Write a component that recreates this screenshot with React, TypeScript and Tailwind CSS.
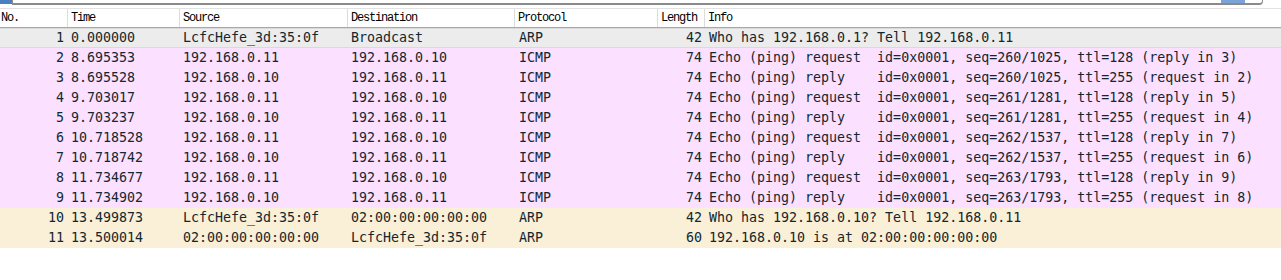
import React from "react";

type Packet = {
  no: number;
  time: string;
  src: string;
  dst: string;
  proto: "ARP" | "ICMP";
  len: number;
  info: string;
};

const packets: Packet[] = [
  { no: 1, time: "0.000000", src: "LcfcHefe_3d:35:0f", dst: "Broadcast", proto: "ARP", len: 42, info: "Who has 192.168.0.1? Tell 192.168.0.11" },
  { no: 2, time: "8.695353", src: "192.168.0.11", dst: "192.168.0.10", proto: "ICMP", len: 74, info: "Echo (ping) request  id=0x0001, seq=260/1025, ttl=128 (reply in 3)" },
  { no: 3, time: "8.695528", src: "192.168.0.10", dst: "192.168.0.11", proto: "ICMP", len: 74, info: "Echo (ping) reply    id=0x0001, seq=260/1025, ttl=255 (request in 2)" },
  { no: 4, time: "9.703017", src: "192.168.0.11", dst: "192.168.0.10", proto: "ICMP", len: 74, info: "Echo (ping) request  id=0x0001, seq=261/1281, ttl=128 (reply in 5)" },
  { no: 5, time: "9.703237", src: "192.168.0.10", dst: "192.168.0.11", proto: "ICMP", len: 74, info: "Echo (ping) reply    id=0x0001, seq=261/1281, ttl=255 (request in 4)" },
  { no: 6, time: "10.718528", src: "192.168.0.11", dst: "192.168.0.10", proto: "ICMP", len: 74, info: "Echo (ping) request  id=0x0001, seq=262/1537, ttl=128 (reply in 7)" },
  { no: 7, time: "10.718742", src: "192.168.0.10", dst: "192.168.0.11", proto: "ICMP", len: 74, info: "Echo (ping) reply    id=0x0001, seq=262/1537, ttl=255 (request in 6)" },
  { no: 8, time: "11.734677", src: "192.168.0.11", dst: "192.168.0.10", proto: "ICMP", len: 74, info: "Echo (ping) request  id=0x0001, seq=263/1793, ttl=128 (reply in 9)" },
  { no: 9, time: "11.734902", src: "192.168.0.10", dst: "192.168.0.11", proto: "ICMP", len: 74, info: "Echo (ping) reply    id=0x0001, seq=263/1793, ttl=255 (request in 8)" },
  { no: 10, time: "13.499873", src: "LcfcHefe_3d:35:0f", dst: "02:00:00:00:00:00", proto: "ARP", len: 42, info: "Who has 192.168.0.10? Tell 192.168.0.11" },
  { no: 11, time: "13.500014", src: "02:00:00:00:00:00", dst: "LcfcHefe_3d:35:0f", proto: "ARP", len: 60, info: "192.168.0.10 is at 02:00:00:00:00:00" },
];

// Row 1 is the selected (unfocused) row, the rest follow the colouring rules.
function rowBg(p: Packet): string {
  if (p.no === 1) return "bg-[#ececec] border-y border-[#dadada]";
  if (p.proto === "ICMP") return "bg-[#fce0ff]";
  return "bg-[#faefd7]";
}

const headFont = { fontFamily: '"Liberation Mono", "Noto Sans CJK SC", monospace' };
const rowFont = { fontFamily: '"DejaVu Sans Mono", monospace' };

function HeadCell({
  label,
  className,
}: Readonly<{ label: string; className: string }>) {
  return (
    <div className={`flex h-full items-center border-r border-[#dcdcdc] pl-[3px] ${className}`}>
      {label}
    </div>
  );
}

export default function App() {
  return (
    <div className="h-[280px] w-[1281px] overflow-hidden bg-white">
      {/* display filter bar, scrolled mostly out of view */}
      <div className="flex h-[5px] items-end overflow-hidden">
        <div className="flex h-[24px] w-full items-end">
          <div className="mb-[1px] h-[22px] w-[12px] bg-[#4a7fc0]" />
          <div
            className="flex h-[24px] flex-1 items-center rounded-br-[4px] border-b-2 border-l border-r border-[#8a8a8a] pl-[4px] text-[12px] text-[#9a9a9a]"
            style={{ fontFamily: '"Noto Sans CJK SC", sans-serif' }}
          >
            <span>应用显示过滤器 …</span>
            <span className="ml-[48px]">&lt;Ctrl-/&gt;</span>
            <div className="ml-auto mr-[17px] h-[22px] w-[24px] bg-[#7aa3d8]" />
          </div>
          <div className="ml-[4px] mr-[6px] mb-[1px] h-[20px] w-[8px] text-[12px] text-[#444]">⇥</div>
        </div>
      </div>
      <div className="h-[3px]" />

      {/* column header */}
      <div
        className="flex h-[20px] border-y border-t-[#e2e2e2] border-b-[#a8a8a8] text-[12px] tracking-[-1.2px] text-black"
        style={headFont}
      >
        <HeadCell label="No." className="-ml-[2px] w-[70px] pl-0" />
        <HeadCell label="Time" className="w-[112px]" />
        <HeadCell label="Source" className="w-[168px]" />
        <HeadCell label="Destination" className="w-[167px]" />
        <HeadCell label="Protocol" className="w-[143px]" />
        <HeadCell label="Length" className="w-[47px]" />
        <div className="flex h-full flex-1 items-center pl-[3px]">Info</div>
      </div>

      {/* packet list */}
      <div className="text-[13.3px] text-[#12272e]" style={rowFont}>
        {packets.map((p) => (
          <div key={p.no} className={`flex h-[20px] items-center whitespace-pre ${rowBg(p)}`}>
            <div className="w-[68px] pr-[4px] text-right">{p.no}</div>
            <div className="w-[112px] pl-[3px]">{p.time}</div>
            <div className="w-[168px] pl-[3px]">{p.src}</div>
            <div className="w-[167px] pl-[3px]">{p.dst}</div>
            <div className="w-[143px] pl-[4px]">{p.proto}</div>
            <div className="w-[47px] pr-[3px] text-right">{p.len}</div>
            <div className="flex-1 pl-[4px]">{p.info}</div>
          </div>
        ))}
      </div>
    </div>
  );
}
